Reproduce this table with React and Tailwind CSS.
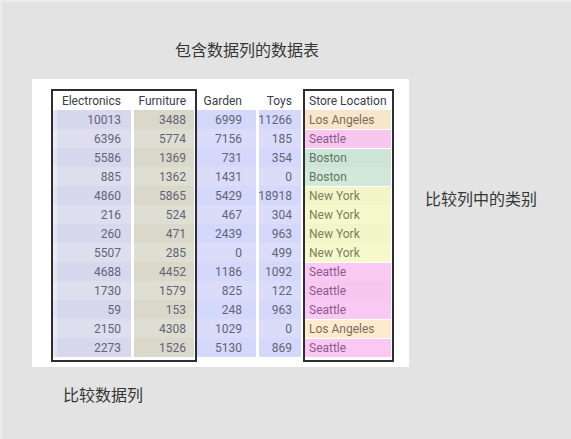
import React from 'react';

const rows = [
  [10013, 3488, 6999, 11266, 'Los Angeles'],
  [6396, 5774, 7156, 185, 'Seattle'],
  [5586, 1369, 731, 354, 'Boston'],
  [885, 1362, 1431, 0, 'Boston'],
  [4860, 5865, 5429, 18918, 'New York'],
  [216, 524, 467, 304, 'New York'],
  [260, 471, 2439, 963, 'New York'],
  [5507, 285, 0, 499, 'New York'],
  [4688, 4452, 1186, 1092, 'Seattle'],
  [1730, 1579, 825, 122, 'Seattle'],
  [59, 153, 248, 963, 'Seattle'],
  [2150, 4308, 1029, 0, 'Los Angeles'],
  [2273, 1526, 5130, 869, 'Seattle'],
];

// category colours: [odd row, even row, text]
const storeStyle = {
  'Los Angeles': ['bg-[#f6e6cb]', 'bg-[#fdebcd]', 'text-[#7d6c5c]'],
  Seattle: ['bg-[#f9c9f3]', 'bg-[#f7c7f0]', 'text-[#8d5a8c]'],
  Boston: ['bg-[#cde5d6]', 'bg-[#d2e8d8]', 'text-[#5f7566]'],
  'New York': ['bg-[#f2f5c7]', 'bg-[#f5f9cb]', 'text-[#7b7f5f]'],
};

const HeaderCell = ({ w, className = '', children }) => (
  <div className={`${w} ${className} h-full flex items-center text-[#3d3d47]`}>{children}</div>
);

export default function App() {
  return (
    <div className="w-[571px] h-[439px] bg-[#e3e3e3] border-l-2 border-t-2 border-[#ececec] flex flex-col" style={{ fontFamily: 'Roboto, "Liberation Sans", sans-serif' }}>
      {/* Title */}
      <div className="h-[77px] pl-[173px] pt-[36px] text-[16px] leading-[22px] text-[#363636]" style={{ fontFamily: '"Noto Sans CJK SC", sans-serif' }}>
        包含数据列的数据表
      </div>

      <div className="flex">
        {/* Table panel */}
        <div className="ml-[30px] w-[377px] h-[288px] bg-white relative pl-[21px] pt-[12px] text-[12px]">
          {/* header */}
          <div className="flex h-[19px] bg-white">
            <div className="w-[4px]" />
            <HeaderCell w="w-[74px]" className="justify-end pr-[10px]">Electronics</HeaderCell>
            <div className="w-[3px]" />
            <HeaderCell w="w-[60px]" className="justify-end pr-[8px]">Furniture</HeaderCell>
            <div className="w-[3px]" />
            <HeaderCell w="w-[59px]" className="justify-end pr-[14px]">Garden</HeaderCell>
            <div className="w-[3px]" />
            <HeaderCell w="w-[42px]" className="justify-end pr-[9px]">Toys</HeaderCell>
            <div className="w-[4px]" />
            <HeaderCell w="w-[86px]" className="pl-[4px]">Store Location</HeaderCell>
          </div>

          {rows.map((r, i) => {
            const odd = i % 2 === 0;
            const st = storeStyle[r[4]];
            const changed = i > 0 && rows[i - 1][4] !== r[4];
            return (
              <div key={i} className="flex h-[19px] text-[#626477]">
                <div className={`w-[4px] ${odd ? 'bg-[#e4e5f3]' : 'bg-[#eaebf5]'}`} />
                <div className={`w-[74px] flex items-center justify-end pr-[10px] ${odd ? 'bg-[#d7d8ee]' : 'bg-[#dedfee]'}`}>{r[0]}</div>
                <div className="w-[3px] bg-white" />
                <div className={`w-[60px] flex items-center justify-end pr-[8px] ${odd ? 'bg-[#d9d8cb]' : 'bg-[#dfded2]'}`}>{r[1]}</div>
                <div className="w-[3px] bg-white" />
                <div className={`w-[59px] flex items-center justify-end pr-[14px] ${odd ? 'bg-[#d4d8fa]' : 'bg-[#dadcf9]'}`}>{r[2]}</div>
                <div className="w-[3px] bg-white" />
                <div className={`w-[42px] flex items-center justify-end pr-[9px] ${odd ? 'bg-[#d4d8fa]' : 'bg-[#dadcf9]'}`}>{r[3]}</div>
                <div className="w-[4px] bg-white" />
                <div className={`w-[86px] flex items-center pl-[4px] ${odd ? st[0] : st[1]} ${st[2]} ${changed ? 'border-t border-white' : ''}`}>{r[4]}</div>
              </div>
            );
          })}

          {/* highlight boxes over the compared columns */}
          <div className="absolute left-[19px] top-[10px] w-[146px] h-[273px] border-2 border-[#2d2d33]" />
          <div className="absolute left-[271px] top-[10px] w-[91px] h-[273px] border-2 border-[#2d2d33]" />
        </div>

        {/* Side label */}
        <div className="ml-[16px] mt-[108px] text-[16px] leading-[22px] text-[#363636]" style={{ fontFamily: '"Noto Sans CJK SC", sans-serif' }}>
          比较列中的类别
        </div>
      </div>

      {/* Bottom label */}
      <div className="pl-[61px] pt-[16px] text-[16px] leading-[22px] text-[#363636]" style={{ fontFamily: '"Noto Sans CJK SC", sans-serif' }}>
        比较数据列
      </div>
    </div>
  );
}
